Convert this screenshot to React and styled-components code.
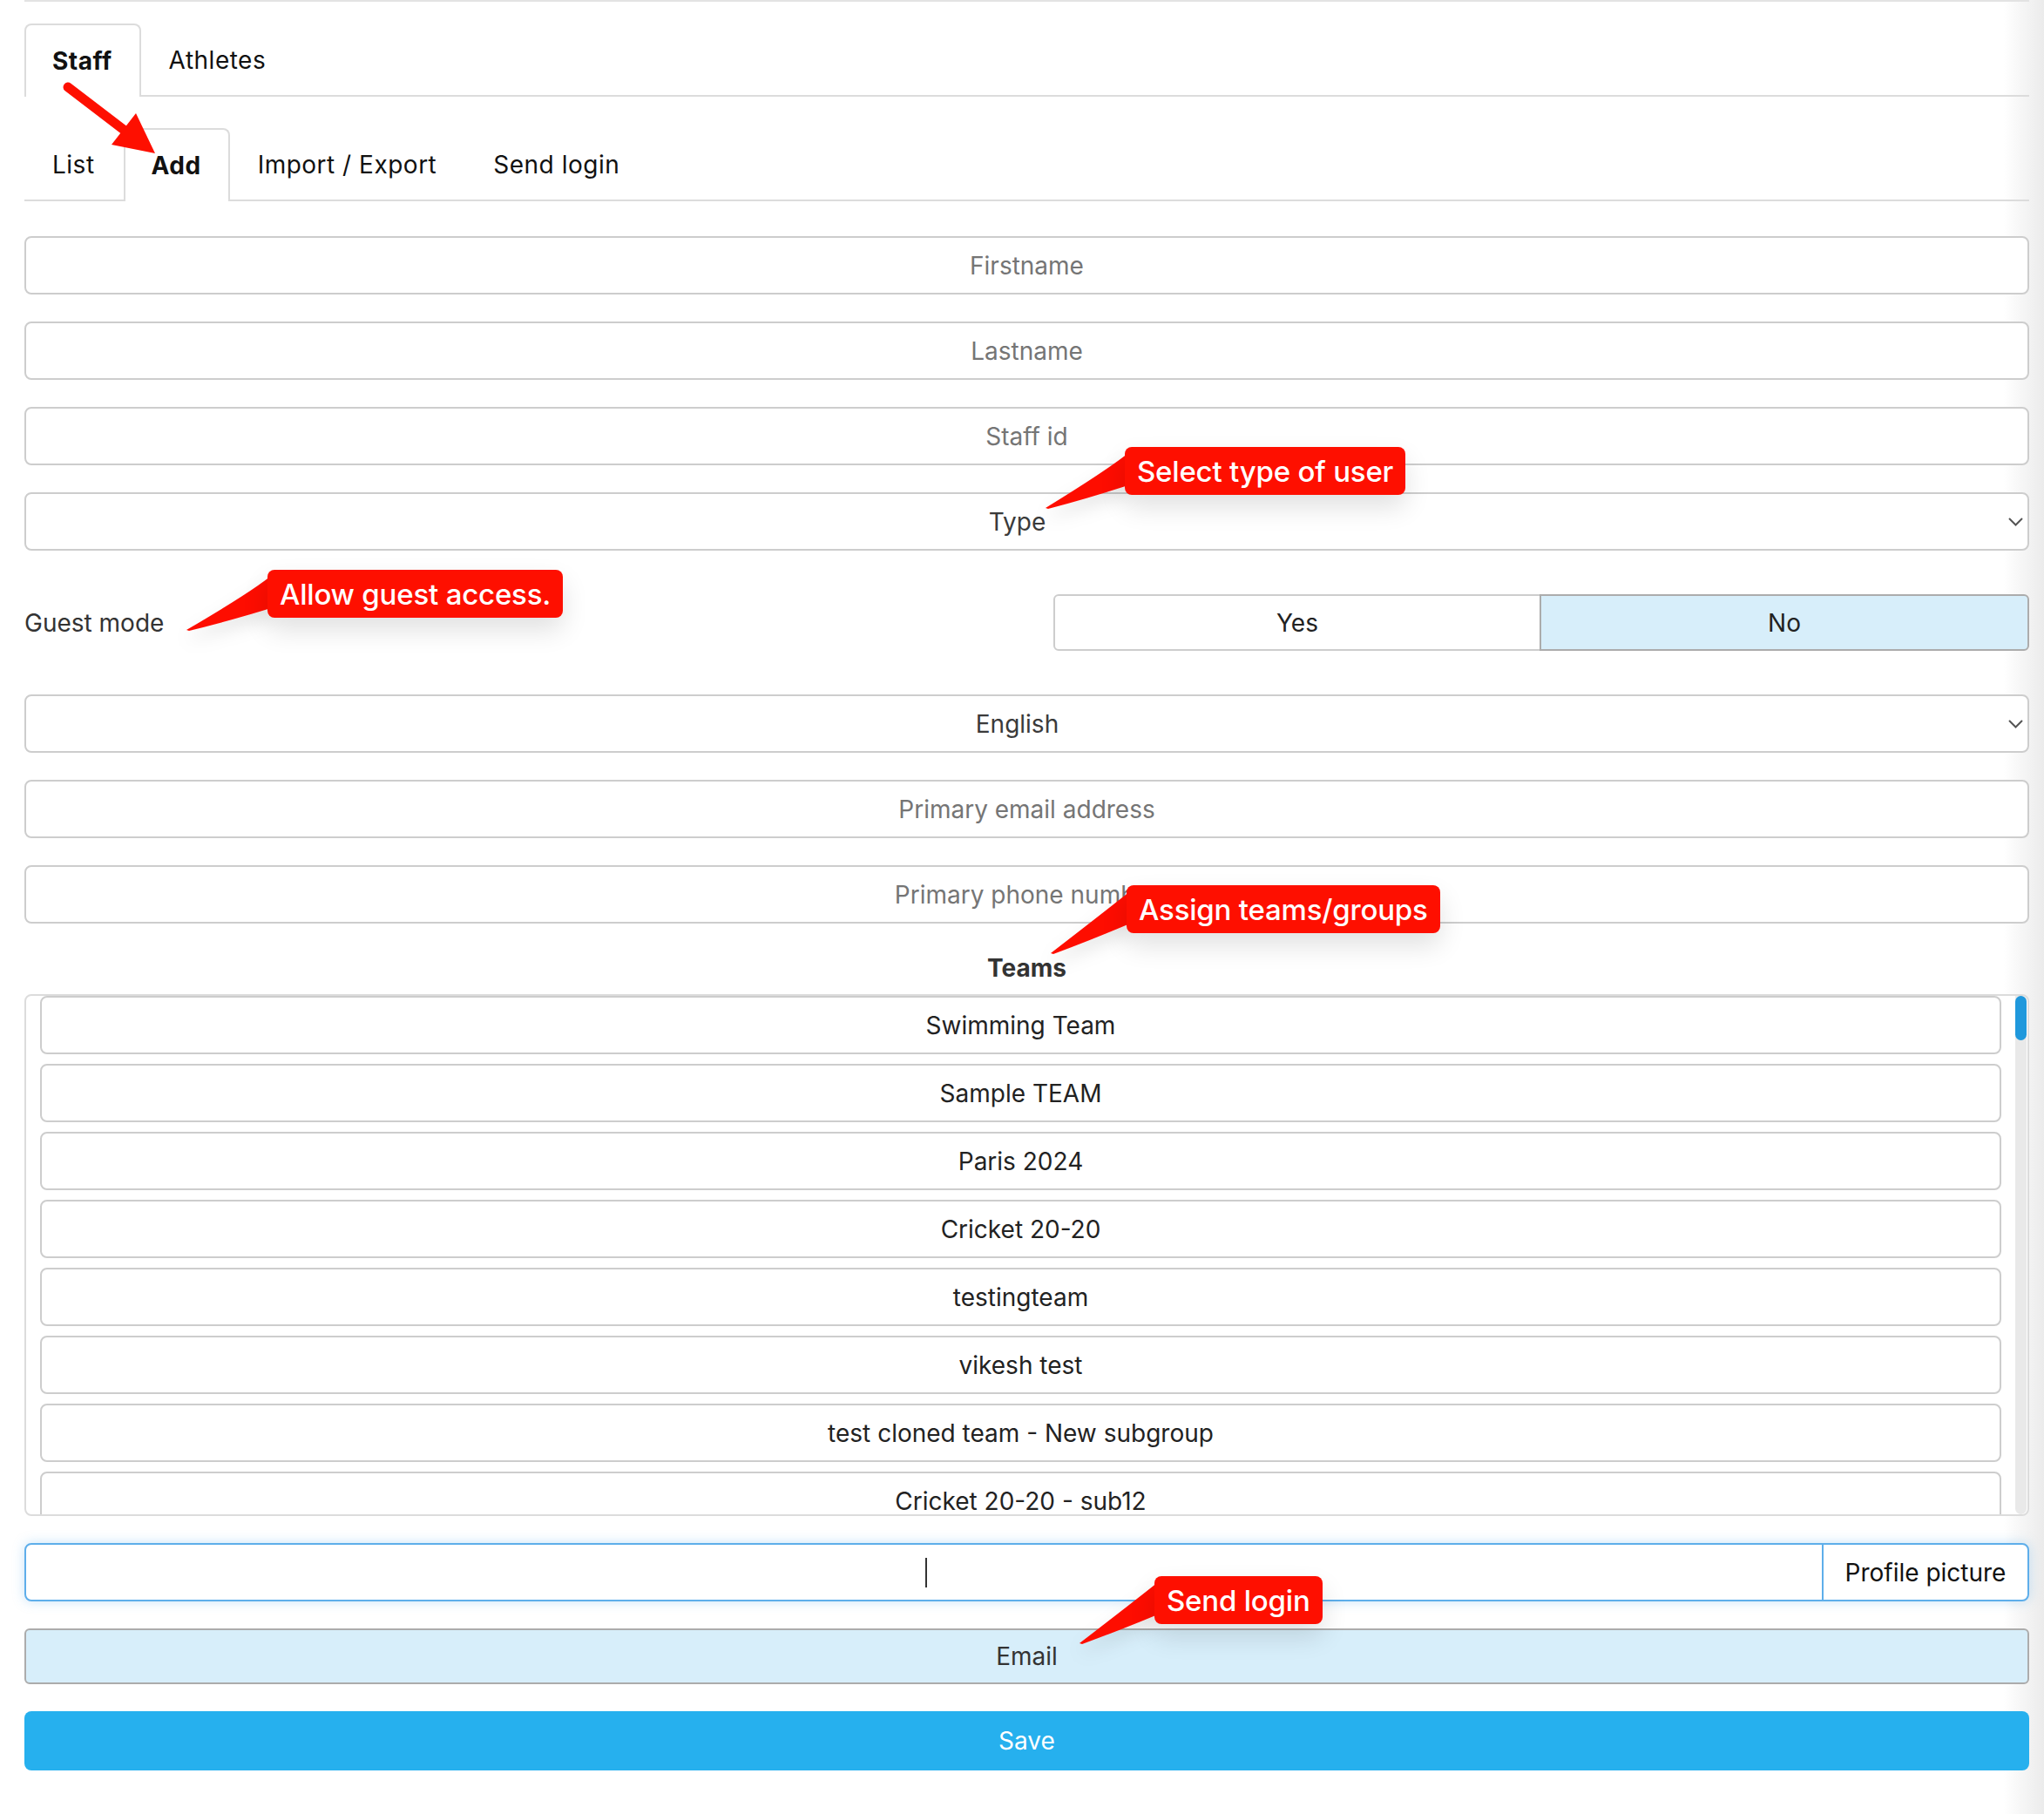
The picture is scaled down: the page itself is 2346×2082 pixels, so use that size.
import React from 'react';
import styled, { createGlobalStyle } from 'styled-components';

const GlobalStyle = createGlobalStyle`
  * { box-sizing: border-box; }
  body {
    margin: 0;
    font-family: Inter, "Noto Sans", sans-serif;
    color: #222;
    background: linear-gradient(to right, #fff 0, #fff 2300px, #ebebeb 2346px);
  }
`;

const Page = styled.div`
  position: relative;
  padding: 0 17px 40px 28px;
  min-height: 2082px;
`;

const Content = styled.div`
  border-top: 2px solid #e3e3e3;
`;

const TabBar = styled.div`
  display: flex;
  margin-top: ${(props) => props.offset}px;
  border-bottom: 2px solid #dcdcdc;
`;

const Tab = styled.div`
  height: 82px;
  display: flex;
  align-items: center;
  padding: 0 31px 0 30px;
  font-size: 28px;
  letter-spacing: 0.5px;
  font-weight: ${(props) => (props.active ? 700 : 400)};
  color: #111;
  border: 2px solid ${(props) => (props.active ? '#dcdcdc' : 'transparent')};
  border-bottom: none;
  border-radius: 8px 8px 0 0;
  background: #fff;
  margin-bottom: -2px;
  ${(props) => props.active && 'height: 84px;'}
`;

const Form = styled.div`
  display: flex;
  flex-direction: column;
  gap: 31px;
  margin-top: 40px;
`;

const TextInput = styled.input`
  height: 67px;
  width: 100%;
  border: 2px solid #cdcdcd;
  border-radius: 8px;
  background: #fff;
  font: inherit;
  font-size: 28px;
  text-align: center;
  color: #333;
  outline: none;

  ::placeholder {
    color: #9b9b9b;
  }
`;

const SelectBox = styled.div`
  height: 67px;
  display: grid;
  grid-template-columns: 1fr 17px;
  align-items: center;
  padding-right: 5px;
  border: 2px solid #cdcdcd;
  border-radius: 8px;
  background: #fff;
  font-size: 28px;
  color: #3a3a3a;
`;

SelectBox.Label = styled.span`
  text-align: center;
`;

const GuestRow = styled.div`
  display: grid;
  grid-template-columns: 1fr 1120px;
  align-items: center;
  padding: 19px 0;
`;

const FieldLabel = styled.span`
  font-size: 28px;
  color: #333;
`;

const Toggle = styled.div`
  display: grid;
  grid-template-columns: 1fr 1fr;
  height: 65px;
`;

Toggle.Option = styled.div`
  display: flex;
  align-items: center;
  justify-content: center;
  font-size: 28px;
  color: #222;
  border: 2px solid ${(props) => (props.selected ? '#acacac' : '#cdcdcd')};
  background: ${(props) => (props.selected ? '#d7eefa' : '#fff')};
  border-radius: ${(props) => (props.first ? '6px 0 0 6px' : '0 6px 6px 0')};
  ${(props) => !props.first && 'margin-left: -2px;'}
`;

const TeamsSection = styled.div`
  display: flex;
  flex-direction: column;
  gap: 10px;
`;

const SectionTitle = styled.div`
  font-size: 28px;
  font-weight: 700;
  color: #333;
  line-height: 40px;
  text-align: center;
`;

const TeamsBox = styled.div`
  height: 599px;
  display: flex;
  border: 2px solid #dcdcdc;
  border-radius: 8px;
  overflow: hidden;
  background: #fff;
`;

const TeamsList = styled.div`
  flex: 1;
  display: flex;
  flex-direction: column;
  gap: 11px;
  padding: 0 16px;
  overflow: hidden;
`;

const TeamItem = styled.div`
  flex: none;
  height: 67px;
  display: flex;
  align-items: center;
  justify-content: center;
  border: 2px solid #cdcdcd;
  border-radius: 8px;
  font-size: 28px;
  color: #222;
`;

const ScrollTrack = styled.div`
  width: 13px;
  margin-right: 1px;
  background: #e9e9e9;
  border-radius: 0 0 7px 7px;
`;

ScrollTrack.Thumb = styled.div`
  height: 51px;
  background: #1f98dc;
  border-radius: 7px;
`;

const FileField = styled.div`
  height: 67px;
  display: grid;
  grid-template-columns: 1fr 236px;
  border: 2px solid #5eaeea;
  border-radius: 8px;
  box-shadow: 0 0 14px rgba(94, 174, 234, 0.35);
  background: #fff;
`;

FileField.Input = styled.div`
  display: flex;
  align-items: center;
  padding-left: 1032px;
`;

FileField.Caret = styled.span`
  width: 2px;
  height: 34px;
  background: #333;
`;

FileField.Button = styled.div`
  display: flex;
  align-items: center;
  justify-content: center;
  border-left: 2px solid #5eaeea;
  font-size: 28px;
  color: #111;
`;

const Button = styled.div`
  height: ${(props) => (props.primary ? 68 : 64)}px;
  display: flex;
  align-items: center;
  justify-content: center;
  font-size: 28px;
  border-radius: ${(props) => (props.primary ? 8 : 6)}px;
  color: ${(props) => (props.primary ? '#fff' : '#333')};
  background: ${(props) => (props.primary ? '#26b0ee' : '#d7eefa')};
  border: ${(props) => (props.primary ? 'none' : '2px solid #acacac')};
`;

/* red annotation bubbles */
const Callout = styled.div`
  position: absolute;
  height: 55px;
  display: flex;
  align-items: center;
  padding: 0 14px;
  background: #fe0f00;
  color: #fff;
  font-size: 33px;
  font-weight: 500;
  letter-spacing: -0.2px;
  border-radius: 8px;
  box-shadow: 0 14px 30px rgba(0, 0, 0, 0.12);
  white-space: nowrap;
`;

const Overlay = styled.svg`
  position: absolute;
  left: 0;
  top: 0;
  pointer-events: none;
  overflow: visible;
`;

const teams = [
  'Swimming Team',
  'Sample TEAM',
  'Paris 2024',
  'Cricket 20-20',
  'testingteam',
  'vikesh test',
  'test cloned team - New subgroup',
  'Cricket 20-20 - sub12',
];

const callouts = [
  { text: 'Select type of user', x: 1291, y: 513, tip: [1200, 583] },
  { text: 'Allow guest access.', x: 307, y: 654, tip: [214, 723] },
  { text: 'Assign teams/groups', x: 1293, y: 1016, tip: [1206, 1094] },
  { text: 'Send login', x: 1325, y: 1809, tip: [1239, 1886] },
];

// speech-bubble tail: wide at the bubble's left edge, narrowing to the tip
function tailPath({ x, y, tip: [tx, ty] }) {
  const top = y + 7;
  const bottom = y + 44;
  const midX = (tx + x) / 2;
  const midY = (ty + bottom) / 2 + 3;
  return [
    `M ${x + 4} ${top}`,
    `Q ${x - 21} ${y + 27} ${tx} ${ty}`,
    `L ${tx + 3} ${ty + 1}`,
    `Q ${midX} ${midY} ${x + 4} ${bottom}`,
    'Z',
  ].join(' ');
}

function Chevron() {
  return (
    <svg width="17" height="10" viewBox="0 0 17 10">
      <polyline points="1,1 8.5,8.5 16,1" fill="none" stroke="#555" strokeWidth="2" />
    </svg>
  );
}

function App() {
  return (
    <>
      <GlobalStyle />
      <Page>
        <Content>
          <TabBar offset={25}>
            <Tab active>Staff</Tab>
            <Tab>Athletes</Tab>
          </TabBar>
          <TabBar offset={36}>
            <Tab>List</Tab>
            <Tab active>Add</Tab>
            <Tab>Import / Export</Tab>
            <Tab>Send login</Tab>
          </TabBar>

          <Form>
            <TextInput placeholder="Firstname" />
            <TextInput placeholder="Lastname" />
            <TextInput placeholder="Staff id" />
            <SelectBox>
              <SelectBox.Label>Type</SelectBox.Label>
              <Chevron />
            </SelectBox>

            <GuestRow>
              <FieldLabel>Guest mode</FieldLabel>
              <Toggle>
                <Toggle.Option first>Yes</Toggle.Option>
                <Toggle.Option selected>No</Toggle.Option>
              </Toggle>
            </GuestRow>

            <SelectBox>
              <SelectBox.Label>English</SelectBox.Label>
              <Chevron />
            </SelectBox>
            <TextInput placeholder="Primary email address" />
            <TextInput placeholder="Primary phone number" />

            <TeamsSection>
              <SectionTitle>Teams</SectionTitle>
              <TeamsBox>
                <TeamsList>
                  {teams.map((team) => (
                    <TeamItem key={team}>{team}</TeamItem>
                  ))}
                </TeamsList>
                <ScrollTrack>
                  <ScrollTrack.Thumb />
                </ScrollTrack>
              </TeamsBox>
            </TeamsSection>

            <FileField>
              <FileField.Input>
                <FileField.Caret />
              </FileField.Input>
              <FileField.Button>Profile picture</FileField.Button>
            </FileField>

            <Button>Email</Button>
            <Button primary>Save</Button>
          </Form>
        </Content>

        <Overlay width="2346" height="2082">
          <defs>
            <filter id="tailShadow" x="-50%" y="-50%" width="200%" height="200%">
              <feDropShadow dx="0" dy="10" stdDeviation="10" floodColor="#000" floodOpacity="0.1" />
            </filter>
          </defs>
          {callouts.map((c) => (
            <path key={c.text} d={tailPath(c)} fill="#fe0f00" filter="url(#tailShadow)" />
          ))}
          <line x1="78" y1="100" x2="146" y2="152" stroke="#fe0f00" strokeWidth="11" strokeLinecap="round" />
          <polygon points="178,176 128,166 156,130" fill="#fe0f00" />
        </Overlay>

        {callouts.map((c) => (
          <Callout key={c.text} style={{ left: c.x, top: c.y }}>
            {c.text}
          </Callout>
        ))}
      </Page>
    </>
  );
}

export default App;
